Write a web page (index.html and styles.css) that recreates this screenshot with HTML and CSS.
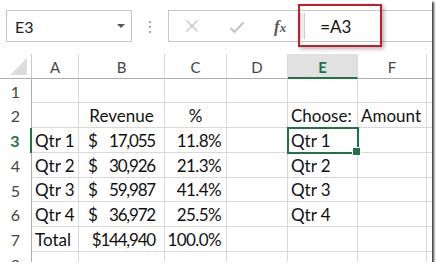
FILE: index.html
```html
<!DOCTYPE html>
<html lang="en">
<head>
    <meta charset="UTF-8">
    <title>Choose quarter</title>
    <link rel="stylesheet" href="styles.css">
</head>
<body>
    <div class="sheet">
        <div class="toolbar">
            <div class="namebox">
                <span>E3</span>
                <span class="arrow"></span>
            </div>
            <div class="dots"><i></i><i></i><i></i></div>
            <div class="formula">
                <span class="fb-icon">
                    <svg width="14" height="14" viewBox="0 0 14 14"><path d="M1.5 1.5 L12.5 12.5 M12.5 1.5 L1.5 12.5" stroke="#c4c4c4" stroke-width="1.4" fill="none"/></svg>
                </span>
                <span class="fb-icon check">
                    <svg width="16" height="13" viewBox="0 0 16 13"><path d="M1.5 7 L5.5 11 L14.5 1.5" stroke="#c4c4c4" stroke-width="2" fill="none"/></svg>
                </span>
                <span class="fx">f<span>x</span></span>
                <span class="split"></span>
                <span class="fb-input">=A3</span>
                <div class="callout"></div>
            </div>
        </div>

        <div class="grid">
            <div class="corner"><span class="tri"></span></div>
            <div class="colhead">A</div>
            <div class="colhead">B</div>
            <div class="colhead">C</div>
            <div class="colhead">D</div>
            <div class="colhead active">E</div>
            <div class="colhead">F</div>
            <div class="colhead end"></div>

            <div class="rowhead">1</div>
            <div class="cell"></div><div class="cell"></div><div class="cell"></div><div class="cell"></div><div class="cell"></div><div class="cell"></div><div class="cell end"></div>

            <div class="rowhead">2</div>
            <div class="cell"></div>
            <div class="cell center">Revenue</div>
            <div class="cell center">%</div>
            <div class="cell"></div>
            <div class="cell">Choose:</div>
            <div class="cell">Amount</div>
            <div class="cell end"></div>

            <div class="rowhead active">3</div>
            <div class="cell">Qtr 1</div>
            <div class="cell money"><span>$</span><span class="num">17,055</span></div>
            <div class="cell right">11.8%</div>
            <div class="cell"></div>
            <div class="cell selected">Qtr 1</div>
            <div class="cell"></div>
            <div class="cell end"></div>

            <div class="rowhead">4</div>
            <div class="cell">Qtr 2</div>
            <div class="cell money"><span>$</span><span class="num">30,926</span></div>
            <div class="cell right">21.3%</div>
            <div class="cell"></div>
            <div class="cell">Qtr 2</div>
            <div class="cell"></div>
            <div class="cell end"></div>

            <div class="rowhead">5</div>
            <div class="cell">Qtr 3</div>
            <div class="cell money"><span>$</span><span class="num">59,987</span></div>
            <div class="cell right">41.4%</div>
            <div class="cell"></div>
            <div class="cell">Qtr 3</div>
            <div class="cell"></div>
            <div class="cell end"></div>

            <div class="rowhead">6</div>
            <div class="cell">Qtr 4</div>
            <div class="cell money"><span>$</span><span class="num">36,972</span></div>
            <div class="cell right">25.5%</div>
            <div class="cell"></div>
            <div class="cell">Qtr 4</div>
            <div class="cell"></div>
            <div class="cell end"></div>

            <div class="rowhead">7</div>
            <div class="cell">Total</div>
            <div class="cell money total"><span class="num">$144,940</span></div>
            <div class="cell right">100.0%</div>
            <div class="cell"></div>
            <div class="cell"></div>
            <div class="cell"></div>
            <div class="cell end"></div>

            <div class="rowhead">8</div>
            <div class="cell"></div><div class="cell"></div><div class="cell"></div><div class="cell"></div><div class="cell"></div><div class="cell"></div><div class="cell end"></div>
        </div>
    </div>
</body>
</html>
```

FILE: styles.css
```css
* {
    box-sizing: border-box;
}
body {
    margin: 0;
    background-color: #ffffff;
    font-family: 'Lato', 'Liberation Sans', sans-serif;
}
.sheet {
    width: 432px;
    height: 262px;
    overflow: hidden;
    background-color: #ffffff;
    box-shadow: 2px 2px 2px rgba(0, 0, 0, 0.75);
}

/* toolbar */
.toolbar {
    height: 54px;
    display: flex;
    align-items: flex-start;
    padding: 10px 0 0 6px;
}
.namebox {
    width: 126px;
    height: 32px;
    border: 1px solid #c6c6c6;
    display: flex;
    align-items: center;
    justify-content: space-between;
    padding: 0 6px 0 8px;
    font-size: 16px;
    color: #222;
}
.arrow {
    width: 0;
    height: 0;
    border-left: 4px solid transparent;
    border-right: 4px solid transparent;
    border-top: 4px solid #555;
}
.dots {
    margin: 11px 0 0 17px;
    display: flex;
    flex-direction: column;
    gap: 3px;
}
.dots i {
    width: 2px;
    height: 2px;
    background-color: #a8a8a8;
}
.formula {
    position: relative;
    flex: 1;
    margin-left: 17px;
    height: 32px;
    border: 1px solid #c6c6c6;
    border-right: none;
    display: flex;
    align-items: center;
    padding-left: 16px;
}
.fb-icon {
    display: flex;
    margin-right: 30px;
}
.check {
    margin-right: 29px;
    margin-top: 3px;
}
.fx {
    font-family: 'Liberation Serif', serif;
    font-style: italic;
    font-weight: bold;
    font-size: 17px;
    color: #5a5a5a;
    margin-top: 2px;
}
.fx span {
    font-size: 13px;
}
.split {
    width: 5px;
    height: 26px;
    margin-left: 14px;
    border-left: 1px solid #cfcfcf;
    border-right: 1px solid #cfcfcf;
    background-color: #efefef;
}
.fb-input {
    margin-left: 15px;
    font-size: 17px;
    color: #111;
}
.callout {
    position: absolute;
    left: 129px;
    top: -7px;
    width: 84px;
    height: 43px;
    border: 2.5px solid #c01f2a;
    box-shadow: 2px 2px 4px rgba(0, 0, 0, 0.3);
}

/* grid */
.grid {
    display: grid;
    grid-template-columns: 32px 47px 86px 62px 61px 70px 69px 1fr;
    grid-template-rows: 25px 24px 25px 25px 25px 24px 25px 25px 25px;
}
.corner {
    border-right: 1px solid #c8c8c8;
    border-bottom: 1px solid #ababab;
    display: flex;
    align-items: flex-end;
    justify-content: flex-end;
    padding: 0 4px 3px 0;
}
.tri {
    width: 17px;
    height: 17px;
    background-color: #dcdcdc;
    clip-path: polygon(100% 0, 100% 100%, 0 100%);
}
.colhead {
    border-right: 1px solid #d8d8d8;
    border-bottom: 1px solid #ababab;
    display: flex;
    align-items: center;
    justify-content: center;
    font-size: 15px;
    color: #444;
    padding-top: 2px;
}
.colhead.active {
    background-color: #e1e1e1;
    border-bottom: 2px solid #217346;
    color: #217346;
    font-weight: bold;
}
.colhead.end, .cell.end {
    border-right: none;
}
.rowhead {
    border-right: 1px solid #ababab;
    display: flex;
    align-items: center;
    justify-content: center;
    font-size: 16px;
    color: #444;
}
.rowhead.active {
    border-right: 2px solid #217346;
    color: #217346;
    font-weight: bold;
}
.cell {
    border-right: 1px solid #d9d9d9;
    border-bottom: 1px solid #d9d9d9;
    display: flex;
    align-items: center;
    padding-left: 3px;
    font-size: 17px;
    color: #111;
    white-space: nowrap;
}
.cell.center {
    justify-content: center;
    padding-left: 0;
}
.cell.right {
    justify-content: flex-end;
    padding-right: 5px;
    letter-spacing: -0.6px;
}
.cell.money {
    justify-content: space-between;
    padding: 0 9px 0 9px;
}
.cell.money.total {
    justify-content: flex-end;
}
.num {
    letter-spacing: -1.2px;
}
.cell.selected {
    position: relative;
    outline: 2px solid #217346;
    outline-offset: -1px;
}
.cell.selected::after {
    content: "";
    position: absolute;
    right: -4px;
    bottom: -4px;
    width: 7px;
    height: 7px;
    background-color: #217346;
    border: 1px solid #ffffff;
}
```
